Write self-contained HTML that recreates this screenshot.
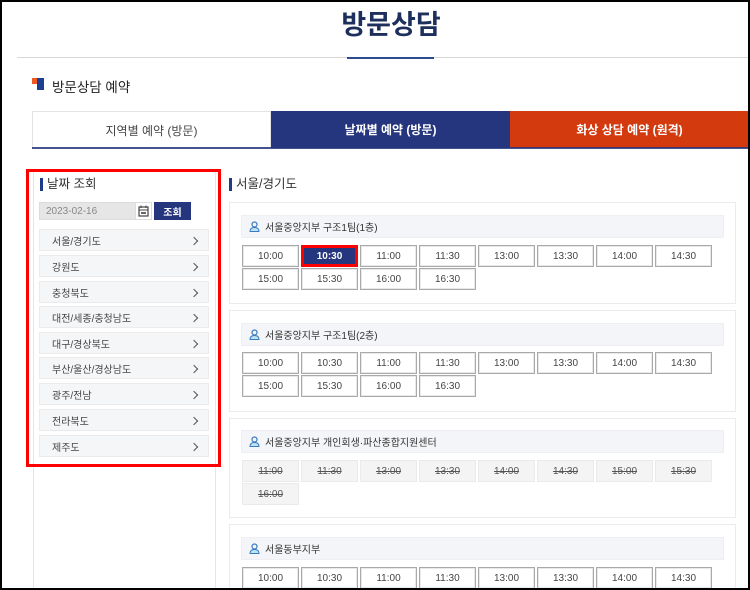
<!DOCTYPE html>
<html><head><meta charset="utf-8"><style>
*{box-sizing:border-box;margin:0;padding:0}
html,body{width:750px;height:590px;overflow:hidden}
body{background:#fff;font-family:"Liberation Sans","Noto Sans CJK KR",sans-serif;position:relative;color:#333}
.a{position:absolute}
.frame{left:0;top:0;width:750px;height:590px;border:2px solid #000;z-index:50;pointer-events:none}
.title{left:0;width:782px;top:3px;text-align:center;font-size:27px;font-weight:bold;color:#1d2f5c}
.tab{top:111px;height:37px;font-size:12px;display:flex;align-items:center;justify-content:center}
.lpanel{left:33px;top:169px;width:183px;height:430px;border:1px solid #e6e6e6}
.h{font-size:12.5px;color:#333;border-left:3px solid #1f3a8a;padding-left:4px;line-height:13px}
.item{left:39px;width:170px;height:22px;background:#f5f6f8;border:1px solid #ebebeb;font-size:10px;display:flex;align-items:center;padding-left:12px;color:#444}
.item:after{content:"";position:absolute;right:11px;top:8px;width:5px;height:5px;border-right:1.3px solid #555;border-top:1.3px solid #555;transform:rotate(45deg)}
.card{left:229px;width:507px;border:1px solid #ebebeb}
.ch{left:241px;width:483px;height:23px;background:#f4f5f8;border:1px solid #eeeff2;font-size:10px;display:flex;align-items:center;padding-left:23px;color:#333}
.ch svg{position:absolute;left:7px;top:5px}
.b{width:57px;height:22px;border:1px solid #a9a9a9;box-shadow:inset 0 0 0 1px #e9e9e9;font-size:10px;display:flex;align-items:center;justify-content:center;color:#444;background:#fff}
.d{background:#f4f4f4;border-color:#eaeaea;box-shadow:none;text-decoration:line-through;color:#555}
</style></head><body>
<div class="a frame"></div>
<div class="a title">방문상담</div>
<div class="a" style="left:17px;top:57px;width:733px;height:1px;background:#d8d8d8"></div>
<div class="a" style="left:347px;top:57px;width:87px;height:2px;background:#2c4a8c"></div>
<div class="a" style="left:32px;top:78px;width:6px;height:6px;background:#f05a22"></div>
<div class="a" style="left:37px;top:78px;width:7px;height:12px;background:#1e3f8f"></div>
<div class="a" style="left:52px;top:76px;font-size:13.5px;color:#222">방문상담 예약</div>
<div class="a tab" style="left:32px;width:239px;border:1px solid #e3e3e3;border-bottom:none;color:#444">지역별 예약 (방문)</div>
<div class="a tab" style="left:271px;width:239px;background:#25367e;color:#fff;font-weight:bold">날짜별 예약 (방문)</div>
<div class="a tab" style="left:510px;width:239px;background:#d33a0e;color:#fff;font-weight:bold">화상 상담 예약 (원격)</div>
<div class="a" style="left:32px;top:147px;width:717px;height:2px;background:#25367e;opacity:.85"></div>

<div class="a lpanel"></div>
<div class="a" style="left:26px;top:169px;width:195px;height:298px;border:3px solid #f00;z-index:10"></div>
<div class="a h" style="left:40px;top:178px">날짜 조회</div>
<div class="a" style="left:39px;top:202px;width:97px;height:18px;background:#e6e6e6;border:1px solid #dcdcdc;font-size:10px;color:#888;display:flex;align-items:center;padding-left:6px">2023-02-16</div>
<div class="a" style="left:135px;top:202px;width:17px;height:18px;border:1px solid #dcdcdc;background:#fff"><svg width="15" height="16" viewBox="0 0 15 16"><rect x="3" y="4" width="9" height="9" fill="none" stroke="#444" stroke-width="1.2"/><line x1="3" y1="7" x2="12" y2="7" stroke="#444"/><line x1="5" y1="2.5" x2="5" y2="5" stroke="#444"/><line x1="10" y1="2.5" x2="10" y2="5" stroke="#444"/><rect x="5" y="9" width="5" height="2" fill="#666"/></svg></div>
<div class="a" style="left:154px;top:202px;width:37px;height:18px;background:#25367e;color:#fff;font-size:10px;display:flex;align-items:center;justify-content:center;font-weight:bold">조회</div>
<div class="a item" style="top:229px">서울/경기도</div>
<div class="a item" style="top:255px">강원도</div>
<div class="a item" style="top:281px">충청북도</div>
<div class="a item" style="top:306px">대전/세종/충청남도</div>
<div class="a item" style="top:332px">대구/경상북도</div>
<div class="a item" style="top:357px">부산/울산/경상남도</div>
<div class="a item" style="top:383px">광주/전남</div>
<div class="a item" style="top:409px">전라북도</div>
<div class="a item" style="top:435px">제주도</div>

<div class="a h" style="left:229px;top:178px">서울/경기도</div>

<div class="a card" style="top:202px;height:102px"></div>
<div class="a ch" style="top:215px"><svg width="11" height="11" viewBox="0 0 11 11"><circle cx="5.5" cy="3.5" r="2.5" fill="none" stroke="#3a7bbf" stroke-width="1.2"/><path d="M1 10.5 Q1 6.5 5.5 6.5 Q10 6.5 10 10.5 Z" fill="#bfe3f5" stroke="#3a7bbf" stroke-width="1"/></svg>서울중앙지부 구조1팀(1층)</div>
<div class="a b" style="left:242px;top:245px">10:00</div>
<div class="a b" style="left:301px;top:245px;background:#25367e;color:#fff;font-weight:bold;border:3px solid #f00;box-shadow:none">10:30</div>
<div class="a b" style="left:360px;top:245px">11:00</div>
<div class="a b" style="left:419px;top:245px">11:30</div>
<div class="a b" style="left:478px;top:245px">13:00</div>
<div class="a b" style="left:537px;top:245px">13:30</div>
<div class="a b" style="left:596px;top:245px">14:00</div>
<div class="a b" style="left:655px;top:245px">14:30</div>
<div class="a b" style="left:242px;top:268px">15:00</div>
<div class="a b" style="left:301px;top:268px">15:30</div>
<div class="a b" style="left:360px;top:268px">16:00</div>
<div class="a b" style="left:419px;top:268px">16:30</div>

<div class="a card" style="top:310px;height:102px"></div>
<div class="a ch" style="top:323px"><svg width="11" height="11" viewBox="0 0 11 11"><circle cx="5.5" cy="3.5" r="2.5" fill="none" stroke="#3a7bbf" stroke-width="1.2"/><path d="M1 10.5 Q1 6.5 5.5 6.5 Q10 6.5 10 10.5 Z" fill="#bfe3f5" stroke="#3a7bbf" stroke-width="1"/></svg>서울중앙지부 구조1팀(2층)</div>
<div class="a b" style="left:242px;top:352px">10:00</div>
<div class="a b" style="left:301px;top:352px">10:30</div>
<div class="a b" style="left:360px;top:352px">11:00</div>
<div class="a b" style="left:419px;top:352px">11:30</div>
<div class="a b" style="left:478px;top:352px">13:00</div>
<div class="a b" style="left:537px;top:352px">13:30</div>
<div class="a b" style="left:596px;top:352px">14:00</div>
<div class="a b" style="left:655px;top:352px">14:30</div>
<div class="a b" style="left:242px;top:375px">15:00</div>
<div class="a b" style="left:301px;top:375px">15:30</div>
<div class="a b" style="left:360px;top:375px">16:00</div>
<div class="a b" style="left:419px;top:375px">16:30</div>

<div class="a card" style="top:418px;height:100px"></div>
<div class="a ch" style="top:430px"><svg width="11" height="11" viewBox="0 0 11 11"><circle cx="5.5" cy="3.5" r="2.5" fill="none" stroke="#3a7bbf" stroke-width="1.2"/><path d="M1 10.5 Q1 6.5 5.5 6.5 Q10 6.5 10 10.5 Z" fill="#bfe3f5" stroke="#3a7bbf" stroke-width="1"/></svg>서울중앙지부 개인회생·파산종합지원센터</div>
<div class="a b d" style="left:242px;top:460px">11:00</div>
<div class="a b d" style="left:301px;top:460px">11:30</div>
<div class="a b d" style="left:360px;top:460px">13:00</div>
<div class="a b d" style="left:419px;top:460px">13:30</div>
<div class="a b d" style="left:478px;top:460px">14:00</div>
<div class="a b d" style="left:537px;top:460px">14:30</div>
<div class="a b d" style="left:596px;top:460px">15:00</div>
<div class="a b d" style="left:655px;top:460px">15:30</div>
<div class="a b d" style="left:242px;top:483px">16:00</div>

<div class="a card" style="top:524px;height:80px"></div>
<div class="a ch" style="top:537px"><svg width="11" height="11" viewBox="0 0 11 11"><circle cx="5.5" cy="3.5" r="2.5" fill="none" stroke="#3a7bbf" stroke-width="1.2"/><path d="M1 10.5 Q1 6.5 5.5 6.5 Q10 6.5 10 10.5 Z" fill="#bfe3f5" stroke="#3a7bbf" stroke-width="1"/></svg>서울동부지부</div>
<div class="a b" style="left:242px;top:567px">10:00</div>
<div class="a b" style="left:301px;top:567px">10:30</div>
<div class="a b" style="left:360px;top:567px">11:00</div>
<div class="a b" style="left:419px;top:567px">11:30</div>
<div class="a b" style="left:478px;top:567px">13:00</div>
<div class="a b" style="left:537px;top:567px">13:30</div>
<div class="a b" style="left:596px;top:567px">14:00</div>
<div class="a b" style="left:655px;top:567px">14:30</div>
</body></html>
